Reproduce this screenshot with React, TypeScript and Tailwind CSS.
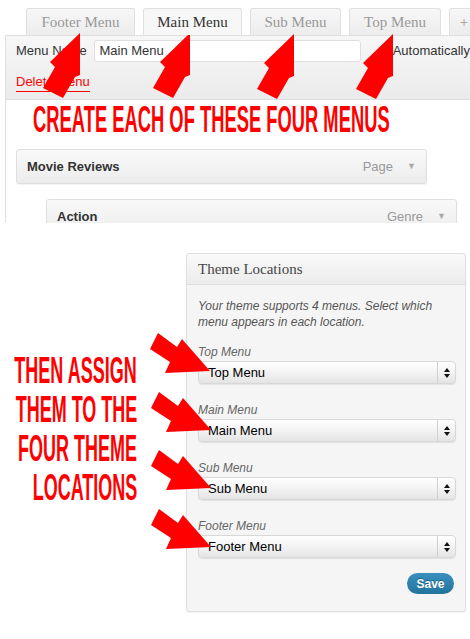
const RED = "#ff0000";

const topArrow: [number, number][] = [[0, 0], [0, 42], [-5, 44], [-17, 65], [-37, 55], [-25, 34], [-30, 29]];
const sideArrow: [number, number][] = [[0, 0], [-45, 2], [-40, -9], [-60, -22], [-52, -38], [-33, -24], [-28, -32]];

const topTips: [number, number][] = [[80, 33], [190, 33], [294, 34], [393, 34]];
const sideTips: [number, number][] = [[210, 371], [211, 430], [211, 488], [211, 547]];

function pts(shape: [number, number][], tip: [number, number]) {
  return shape.map(([x, y]) => `${tip[0] + x},${tip[1] + y}`).join(" ");
}

const tabs = [
  { label: "Footer Menu", w: "w-[109px]" },
  { label: "Main Menu", w: "w-[99px]", active: true },
  { label: "Sub Menu", w: "w-[91px]" },
  { label: "Top Menu", w: "w-[92px]" },
  { label: "+", w: "w-[30px]" },
];

function Tab({ label, w, active }: { label: string; w: string; active?: boolean }) {
  return (
    <div
      className={`${w} shrink-0 flex items-center justify-center rounded-t-[3px] border border-b-0 border-[#dfdfdf] text-[15px] font-['Liberation_Serif',serif] ${
        active ? "h-[28px] -mb-px relative z-10 bg-[#f7f7f7] text-[#333]" : "h-[27px] bg-gradient-to-b from-[#f7f7f7] to-[#ececec] text-[#999]"
      }`}
    >
      {label}
    </div>
  );
}

function MenuItem({ title, type, indent }: { title: string; type: string; indent?: boolean }) {
  return (
    <div
      className={`${indent ? "ml-[40px] mt-[15px]" : "ml-[10px] mt-[11px]"} w-[411px] h-[35px] shrink-0 flex items-center justify-between pl-[10px] pr-[10px] rounded-[3px] border border-[#dfdfdf] bg-gradient-to-b from-[#f9f9f9] to-[#ececec] shadow-[0_1px_1px_rgba(0,0,0,0.05)]`}
    >
      <span className="text-[13px] font-bold text-[#333]">{title}</span>
      <span className="flex items-center gap-[14px] text-[13px] text-[#999]">
        {type}
        <span className="text-[9px] text-[#aaa]">▼</span>
      </span>
    </div>
  );
}

function Select({ label, value, first }: { label: string; value: string; first?: boolean }) {
  return (
    <div className={first ? "mt-[14px]" : "mt-[18px]"}>
      <div className="text-[12px] leading-[16px] italic text-[#666]">{label}</div>
      <div className="mt-px w-[258px] h-[23px] flex items-center rounded-[4px] border border-[#d8d8d8] bg-gradient-to-b from-white via-[#f3f3f3] to-[#e4e4e4] shadow-[0_1px_1px_rgba(0,0,0,0.08)]">
        <span className="flex-1 pl-[9px] text-[13px] text-black">{value}</span>
        <span className="w-[18px] h-full flex items-center justify-center border-l border-[#d0d0d0]">
          <svg width="6" height="10" viewBox="0 0 6 10">
            <path d="M3 0 L6 4 L0 4 Z M0 6 L6 6 L3 10 Z" fill="#111" />
          </svg>
        </span>
      </div>
    </div>
  );
}

function Shout({ children, origin }: { children: string; origin: "left" | "right" }) {
  return (
    <span
      className={`inline-block shrink-0 whitespace-nowrap font-bold uppercase text-[36px] ${
        origin === "left" ? "origin-left leading-[36px] scale-x-[0.51]" : "origin-right leading-[39px] scale-x-[0.5]"
      }`}
      style={{ color: RED }}
    >
      {children}
    </span>
  );
}

export default function App() {
  return (
    <div className="relative w-[470px] h-[639px] overflow-hidden bg-white font-['Liberation_Sans',Arial,sans-serif]">
      {/* menu editor screenshot */}
      <div className="h-[223px] overflow-hidden">
        <div className="flex gap-2 pl-[26px] pt-[8px] overflow-hidden">
          {tabs.map((t) => (
            <Tab key={t.label} {...t} />
          ))}
        </div>
        <div className="ml-[5px] h-[65px] border border-r-0 border-[#dfdfdf] bg-gradient-to-b from-[#f7f7f7] to-[#ebebeb]">
          <div className="flex items-center mt-[4px] h-[22px]">
            <span className="w-[89px] pl-[10px] text-[13px] text-[#333]">Menu Name</span>
            <div className="w-[268px] h-[22px] flex items-center pl-[4px] bg-white border border-[#dfdfdf] rounded-[3px] text-[13px] text-[#333]">
              Main Menu
            </div>
            <span className="ml-[32px] whitespace-nowrap text-[13px] text-[#333]">Automatically</span>
          </div>
          <div className="mt-[12px] ml-[10px] w-[74px] pb-[1px] border-b border-[#f00] text-[13px] leading-[16px] text-[#f00]">
            Delete Menu
          </div>
        </div>
        <div className="ml-[5px] h-[200px] border-l border-[#dfdfdf] flex flex-col">
          <div className="pl-[27px] pt-[2px] h-[38px]">
            <Shout origin="left">Create each of these four menus</Shout>
          </div>
          <MenuItem title="Movie Reviews" type="Page" />
          <MenuItem title="Action" type="Genre" indent />
        </div>
      </div>

      {/* theme locations */}
      <div className="flex">
        <div className="w-[186px] shrink-0 pt-[128px] pr-[49px] flex flex-col items-end">
          <Shout origin="right">Then assign</Shout>
          <Shout origin="right">them to the</Shout>
          <Shout origin="right">four theme</Shout>
          <Shout origin="right">locations</Shout>
        </div>
        <div className="mt-[30px] w-[280px] h-[359px] shrink-0 rounded-[3px] border border-[#dfdfdf] bg-[#f5f5f5] shadow-[0_1px_2px_rgba(0,0,0,0.06)]">
          <div className="h-[31px] flex items-center px-[11px] border-b border-[#dfdfdf] rounded-t-[3px] bg-gradient-to-b from-[#f9f9f9] to-[#ececec] text-[15px] text-[#464646] font-['Liberation_Serif',serif]">
            Theme Locations
          </div>
          <div className="px-[11px] pt-[13px]">
            <p className="text-[12px] leading-[16px] italic text-[#555]">
              Your theme supports 4 menus. Select which
              <br />
              menu appears in each location.
            </p>
            <Select label="Top Menu" value="Top Menu" first />
            <Select label="Main Menu" value="Main Menu" />
            <Select label="Sub Menu" value="Sub Menu" />
            <Select label="Footer Menu" value="Footer Menu" />
            <div className="mt-[15px] flex justify-end">
              <button className="w-[47px] h-[21px] rounded-full bg-gradient-to-b from-[#3a8fbf] to-[#21759b] text-[12px] font-bold text-white [text-shadow:0_-1px_0_rgba(0,0,0,0.3)]">
                Save
              </button>
            </div>
          </div>
        </div>
      </div>

      {/* annotation arrows */}
      <svg className="absolute inset-0 pointer-events-none" width="470" height="639" viewBox="0 0 470 639">
        {topTips.map((t, i) => (
          <polygon key={`t${i}`} points={pts(topArrow, t)} fill={RED} />
        ))}
        {sideTips.map((t, i) => (
          <polygon key={`s${i}`} points={pts(sideArrow, t)} fill={RED} />
        ))}
      </svg>
    </div>
  );
}
